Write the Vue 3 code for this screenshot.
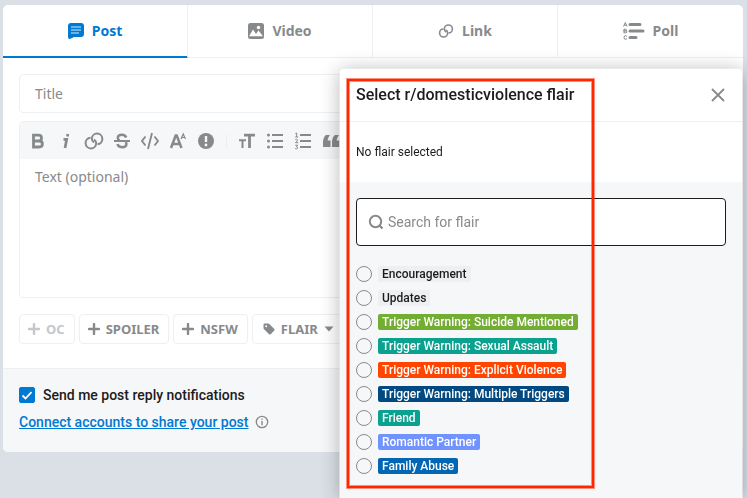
<script setup>
import { ref } from 'vue'

const tabs = ['Post', 'Video', 'Link', 'Poll']
const active = ref('Post')
const notify = ref(true)
const picked = ref('')
const flairs = [
  { text: 'Encouragement', tone: 'plain' },
  { text: 'Updates', tone: 'plain' },
  { text: 'Trigger Warning: Suicide Mentioned', tone: 'green' },
  { text: 'Trigger Warning: Sexual Assault', tone: 'teal' },
  { text: 'Trigger Warning: Explicit Violence', tone: 'orange' },
  { text: 'Trigger Warning: Multiple Triggers', tone: 'navy' },
  { text: 'Friend', tone: 'teal' },
  { text: 'Romantic Partner', tone: 'violet' },
  { text: 'Family Abuse', tone: 'blue' },
]
</script>

<template>
  <div class="page">
    <main class="card">
      <nav class="tabs">
        <button v-for="t in tabs" :key="t" type="button" class="tab" :class="{ active: active === t }" @click="active = t">
          <svg v-if="t === 'Post'" width="16" height="16" viewBox="0 0 16 16">
            <path d="M3 0h10a3 3 0 0 1 3 3v8a3 3 0 0 1-3 3H6l-3.5 1.8Q0 16.400 0 14V3a3 3 0 0 1 3-3z" fill="currentColor" />
            <path d="M3 4h10M3 7h10M3 10h8" stroke="#8fc6ee" stroke-width="1.700" />
          </svg>
          <svg v-else-if="t === 'Video'" width="16" height="16" viewBox="0 0 16 16">
            <rect width="16" height="16" rx="2.500" fill="currentColor" />
            <path d="M1 13.200 5 6.500l3 4.500 2.500-3.500 4.500 5.700z" fill="#fff" />
            <circle cx="10.500" cy="4.500" r="1.700" fill="#fff" />
          </svg>
          <svg v-else-if="t === 'Link'" class="line" width="16" height="16" viewBox="0 0 20 20">
            <path d="M7 7.500A5 5 0 1 0 12 12.500Q12 10 10 8.800" />
            <path d="M13 12.500A5 5 0 1 0 8 7.500Q8 10 10 11.200" />
          </svg>
          <svg v-else width="22" height="18" viewBox="0 0 22 18">
            <path d="M7 2.500h10M7 9h13M7 15.500h6" stroke="currentColor" stroke-width="3" stroke-linecap="round" />
            <path d="M.5 4.500 2.300.5l1.800 4M1.200 3.200h2.200M.9 7.200v3.600h2q1.200-.2 1-1.100-.1-.8-1-.8h-2 1.700q.9 0 .9-.8 0-.9-1-.9zM4 14.500Q2.800 13 1.500 14q-1 1.500 0 3 1.300 1 2.500-.5" fill="none" stroke="currentColor" />
          </svg>
          <span>{{ t }}</span>
        </button>
      </nav>

      <section class="body">
        <input class="title" type="text" placeholder="Title" aria-label="Title" />
        <div class="editor">
          <div class="toolbar">
            <button type="button" aria-label="Bold"><svg class="fine" width="20" height="20" viewBox="0 0 20 20"><path d="M5.500 4.200h5q3 0 3 2.800 0 3-3 3h-5zM5.500 10h5.700q3.200 0 3.200 3t-3.200 3H5.500z" stroke-width="2.800" /></svg></button>
            <button type="button" aria-label="Italic"><svg class="fine" width="20" height="20" viewBox="0 0 20 20"><path d="M7.500 8.300h3.200L9 17M11.900 3l-.5 2.600" stroke-width="2.700" /></svg></button>
            <button type="button" aria-label="Link"><svg class="line" width="20" height="20" viewBox="0 0 20 20"><path d="M6.500 6.800A5.300 5.300 0 1 0 12.200 12.500Q12.200 10 10 8.500" /><path d="M13.500 13.200A5.300 5.300 0 1 0 7.800 7.500Q7.800 10 10 11.500" /></svg></button>
            <button type="button" aria-label="Strikethrough"><svg class="fine" width="20" height="20" viewBox="0 0 20 20"><path d="M14.200 6.500Q13.200 3.800 10 3.800 5.800 3.800 5.800 7q0 1.500 1.700 2.500M5.400 13.200q1 3 4.600 3 4.400 0 4.400-3.200 0-1-.7-2" stroke-width="2.500" /><path d="M2 10h16" stroke-width="1.800" /></svg></button>
            <button type="button" aria-label="Code"><svg class="fine" width="20" height="20" viewBox="0 0 20 20"><path d="M5.500 5.500 2 10l3.500 4.500M14.500 5.500 18 10l-3.500 4.500M12 2 8 18" stroke-width="1.900" /></svg></button>
            <button type="button" aria-label="Superscript"><svg class="fine" width="20" height="20" viewBox="0 0 20 20"><path d="M3 17 7.700 4.500h1L13.500 17M5 13h7" stroke-width="2.500" /><path d="m13 8 2.200-5L17.500 8M13.800 6.500h3" stroke-width="1.200" /></svg></button>
            <button type="button" aria-label="Spoiler"><svg width="20" height="20" viewBox="0 0 20 20"><circle cx="10" cy="10" r="8" fill="currentColor" /><path d="M10 5v6" stroke="#f6f7f8" stroke-width="2.400" /><circle cx="10" cy="14" r="1.400" fill="#f6f7f8" /></svg></button>
            <span class="rule"></span>
            <button type="button" aria-label="Heading"><svg class="fine" width="20" height="20" viewBox="0 0 20 20"><path d="M7 4.200h11M12.500 4v13" stroke-width="2.800" /><path d="M2 9.200h7M5.500 9v8" stroke-width="2" /></svg></button>
            <button type="button" aria-label="Bulleted list"><svg class="fine" width="20" height="20" viewBox="0 0 20 20"><path d="M7 4h11M7 10h11M7 16h11" stroke-width="1.800" /><g fill="currentColor" stroke="none"><circle cx="3.500" cy="4" r="1.500" /><circle cx="3.500" cy="10" r="1.500" /><circle cx="3.500" cy="16" r="1.500" /></g></svg></button>
            <button type="button" aria-label="Numbered list"><svg class="fine" width="20" height="20" viewBox="0 0 20 20"><path d="M7 4h11M7 10h11M7 16h11" stroke-width="1.800" /><path d="M2.300 2.700 3.700 2v4M2.200 6h3M2.300 8.700q1.300-1 2.200 0 .4 1-2 3h2.800M2.300 14.200h2.400l-1.400 1.500q1.900.2 1.200 1.600-1 1-2.300.2" /></svg></button>
            <button type="button" aria-label="Quote"><svg width="20" height="20" viewBox="0 0 20 20"><path d="M2 16V10.500Q2.500 5.500 5 4H9Q7 6 6.500 9.500H9.500V16zM11 16V10.500Q11.500 5.500 14 4H18Q16 6 15.500 9.500H18.500V16z" fill="currentColor" /></svg></button>
          </div>
          <textarea placeholder="Text (optional)" aria-label="Text"></textarea>
        </div>
        <div class="marks">
          <button v-for="m in ['OC', 'SPOILER', 'NSFW']" :key="m" type="button" class="mark" :disabled="m === 'OC'">
            <svg width="12" height="12" viewBox="0 0 12 12"><path d="M6 1v10M1 6h10" stroke="currentColor" stroke-width="2.400" stroke-linecap="round" /></svg>
            {{ m }}
          </button>
          <button type="button" class="mark flair-mark">
            <svg width="12" height="12" viewBox="0 0 12 12"><path fill-rule="evenodd" d="M1.500.5H5q.8 0 1.300.5l5 5q.8.8 0 1.600L7.700 11.200q-.8.8-1.600 0L1 6.200Q.5 5.700.5 5V1.500q0-1 1-1zM3.200 2.200a1 1 0 1 0 0 2 1 1 0 0 0 0-2z" fill="currentColor" /></svg>
            FLAIR
            <svg class="caret" width="10" height="6" viewBox="0 0 10 6"><path d="M.5.500h9L5 5.500z" fill="currentColor" /></svg>
          </button>
        </div>
      </section>

      <footer class="foot">
        <label class="notify">
          <input v-model="notify" type="checkbox" />
          <svg class="tick" width="16" height="16" viewBox="0 0 16 16"><path d="m3.500 8.500 3 3 6-6.300" fill="none" stroke="#fff" stroke-width="1.800" /></svg>
          <span>Send me post reply notifications</span>
        </label>
        <div class="share">
          <a href="#">Connect accounts to share your post</a>
          <svg class="fine" width="14" height="14" viewBox="0 0 14 14"><circle cx="7" cy="7" r="5.700" stroke-width="1.300" /><path d="M7 6v4.300M7 3.500v1.300" stroke-width="1.400" /></svg>
        </div>
      </footer>
    </main>

    <section class="modal" role="dialog" aria-labelledby="modal-title">
      <header class="modal-head">
        <h1 id="modal-title">Select r/domesticviolence flair</h1>
        <button type="button" class="close" aria-label="Close">
          <svg class="fine" width="14" height="14" viewBox="0 0 14 14"><path d="m1 1 12 12M13 1 1 13" stroke-width="1.800" /></svg>
        </button>
      </header>
      <p class="chosen">No flair selected</p>
      <div class="picker">
        <label class="search">
          <svg class="fine" width="16" height="16" viewBox="0 0 16 16"><circle cx="7.500" cy="7.500" r="5.700" stroke-width="2" /><path d="m11.500 11.500 3 3" stroke-width="2.200" /></svg>
          <input type="text" placeholder="Search for flair" aria-label="Search for flair" />
        </label>
        <div class="options">
          <label v-for="f in flairs" :key="f.text" class="option">
            <input v-model="picked" type="radio" name="flair" :value="f.text" />
            <span class="pill" :class="f.tone">{{ f.text }}</span>
          </label>
        </div>
      </div>
      <div class="highlight"></div>
    </section>
  </div>
</template>

<style>
body {
  background: #dae0e6;
}
</style>

<style scoped>
* {
  box-sizing: border-box;
}
.page {
  min-height: 100vh;
  padding: 5px 4px 0 3px;
  background: #dae0e6;
  color: #1c1c1c;
  font-family: Roboto, "Noto Sans", sans-serif;
  overflow: hidden;
}
button,
input,
textarea {
  font: inherit;
  color: inherit;
  margin: 0;
}
button {
  border: 0;
  padding: 0;
  background: none;
  cursor: pointer;
}
svg {
  flex: none;
  display: block;
}
.fine,
.line {
  fill: none;
  stroke: currentColor;
}
.line {
  stroke-width: 2;
}
.card {
  background: #fff;
  border-radius: 5px;
  overflow: hidden;
}
.tabs {
  display: grid;
  grid-template-columns: repeat(4, 1fr);
}
.tab {
  display: flex;
  align-items: center;
  justify-content: center;
  gap: 8px;
  height: 53px;
  border-right: 1px solid #edeff1;
  border-bottom: 1px solid #edeff1;
  color: #878a8c;
  font: 700 14px/20px "Noto Sans", sans-serif;
}
.tab:last-child {
  border-right: 0;
}
.tab.active {
  color: #0079d3;
  box-shadow: inset 0 -1px #0079d3;
  border-bottom-color: #0079d3;
}
.body {
  padding: 16px;
  padding-bottom: 24px;
}
.title {
  display: block;
  width: 100%;
  height: 39px;
  padding: 0 15px;
  border: 1px solid #edeff1;
  border-radius: 4px;
  font: 14px/20px "Noto Sans", sans-serif;
}
::placeholder {
  color: #878a8c;
  opacity: 1;
}
.editor {
  margin-top: 8px;
  border: 1px solid #edeff1;
  border-radius: 4px;
  overflow: hidden;
}
.toolbar {
  display: flex;
  align-items: center;
  gap: 8px;
  height: 37px;
  padding: 0 8px;
  background: #f6f7f8;
  color: #878a8c;
}
.rule {
  width: 1px;
  height: 14px;
  margin: 0 2px;
  background: #edeff1;
}
textarea {
  display: block;
  width: 100%;
  height: 138px;
  padding: 8px 15px;
  border: 0;
  resize: none;
  font: 14px/20px "Noto Sans", sans-serif;
}
.marks {
  display: flex;
  gap: 4px;
  margin-top: 16px;
}
.mark {
  display: flex;
  align-items: center;
  gap: 6px;
  height: 30px;
  padding: 0 9px 0 8px;
  border: 1px solid #edeff1;
  border-radius: 4px;
  color: #878a8c;
  font: 700 13px/16px "Noto Sans", sans-serif;
}
.mark:disabled {
  color: #c5c7c8;
}
.flair-mark {
  padding-left: 10px;
}
.foot {
  display: grid;
  gap: 7px;
  padding: 16px;
  border-top: 1px solid #edeff1;
  background: #f6f7f8;
  font-size: 14px;
  font-weight: 500;
  line-height: 20px;
}
.notify {
  display: flex;
  align-items: center;
  gap: 8px;
  position: relative;
}
.notify input {
  appearance: none;
  width: 16px;
  height: 16px;
  border: 1px solid #0079d3;
  border-radius: 2px;
}
.notify input:checked {
  background: #0079d3;
}
.tick {
  position: absolute;
  left: 0;
}
.share {
  display: flex;
  align-items: center;
  gap: 6px;
  padding-bottom: 4px;
  color: #878a8c;
}
.share a {
  color: #0079d3;
}
.modal {
  position: fixed;
  top: 69px;
  right: 5px;
  bottom: 0;
  width: 402px;
  max-width: calc(100% - 10px);
  border-radius: 4px 4px 0 0;
  background: #f6f7f8;
  box-shadow: 0 0 0 1px rgba(237, 239, 241, 0.6), 0 2px 20px rgba(0, 0, 0, 0.3);
}
.modal-head {
  display: flex;
  align-items: center;
  justify-content: space-between;
  height: 53px;
  padding: 0 16px;
  border-bottom: 1px solid #edeff1;
  border-radius: 4px 4px 0 0;
  background: #fff;
}
h1 {
  margin: 0;
  font-size: 16px;
  font-weight: 500;
  line-height: 20px;
}
.close {
  padding: 1px;
  color: #878a8c;
}
.chosen {
  margin: 0;
  padding: 20px 16px;
  background: #fff;
  font-size: 12px;
  line-height: 20px;
}
.picker {
  padding: 16px;
}
.search {
  display: flex;
  align-items: center;
  gap: 4px;
  height: 48px;
  padding: 0 11px;
  border: 1px solid #1c1c1c;
  border-radius: 4px;
  background: #fff;
  color: #878a8c;
}
.search input {
  flex: 1;
  min-width: 0;
  padding: 0;
  border: 0;
  outline: 0;
  background: none;
  font-size: 14px;
  line-height: 20px;
}
.options {
  display: grid;
  gap: 8px;
  margin-top: 20px;
}
.option {
  display: flex;
  align-items: center;
  gap: 6px;
  height: 16px;
}
.option input {
  appearance: none;
  flex: none;
  width: 16px;
  height: 16px;
  border: 1px solid #878a8c;
  border-radius: 50%;
}
.option input:checked {
  border: 5px solid #0079d3;
}
.pill {
  padding: 0 4px;
  border-radius: 2px;
  color: #fff;
  font-size: 12px;
  font-weight: 500;
  line-height: 16px;
}
.plain {
  background: #edeff1;
  color: #1c1c1c;
}
.green { background: #73ad34; }
.teal { background: #0aa18f; }
.orange { background: #ff4500; }
.navy { background: #014980; }
.violet { background: #7193ff; }
.blue { background: #0266b3; }
.highlight {
  position: absolute;
  top: 10px;
  left: 7px;
  width: 247px;
  height: 409px;
  border: 2px solid #ff2600;
  box-shadow: 0 0 0 1px rgba(255, 38, 0, 0.5), inset 0 0 0 1px rgba(255, 38, 0, 0.5);
  pointer-events: none;
}
</style>
